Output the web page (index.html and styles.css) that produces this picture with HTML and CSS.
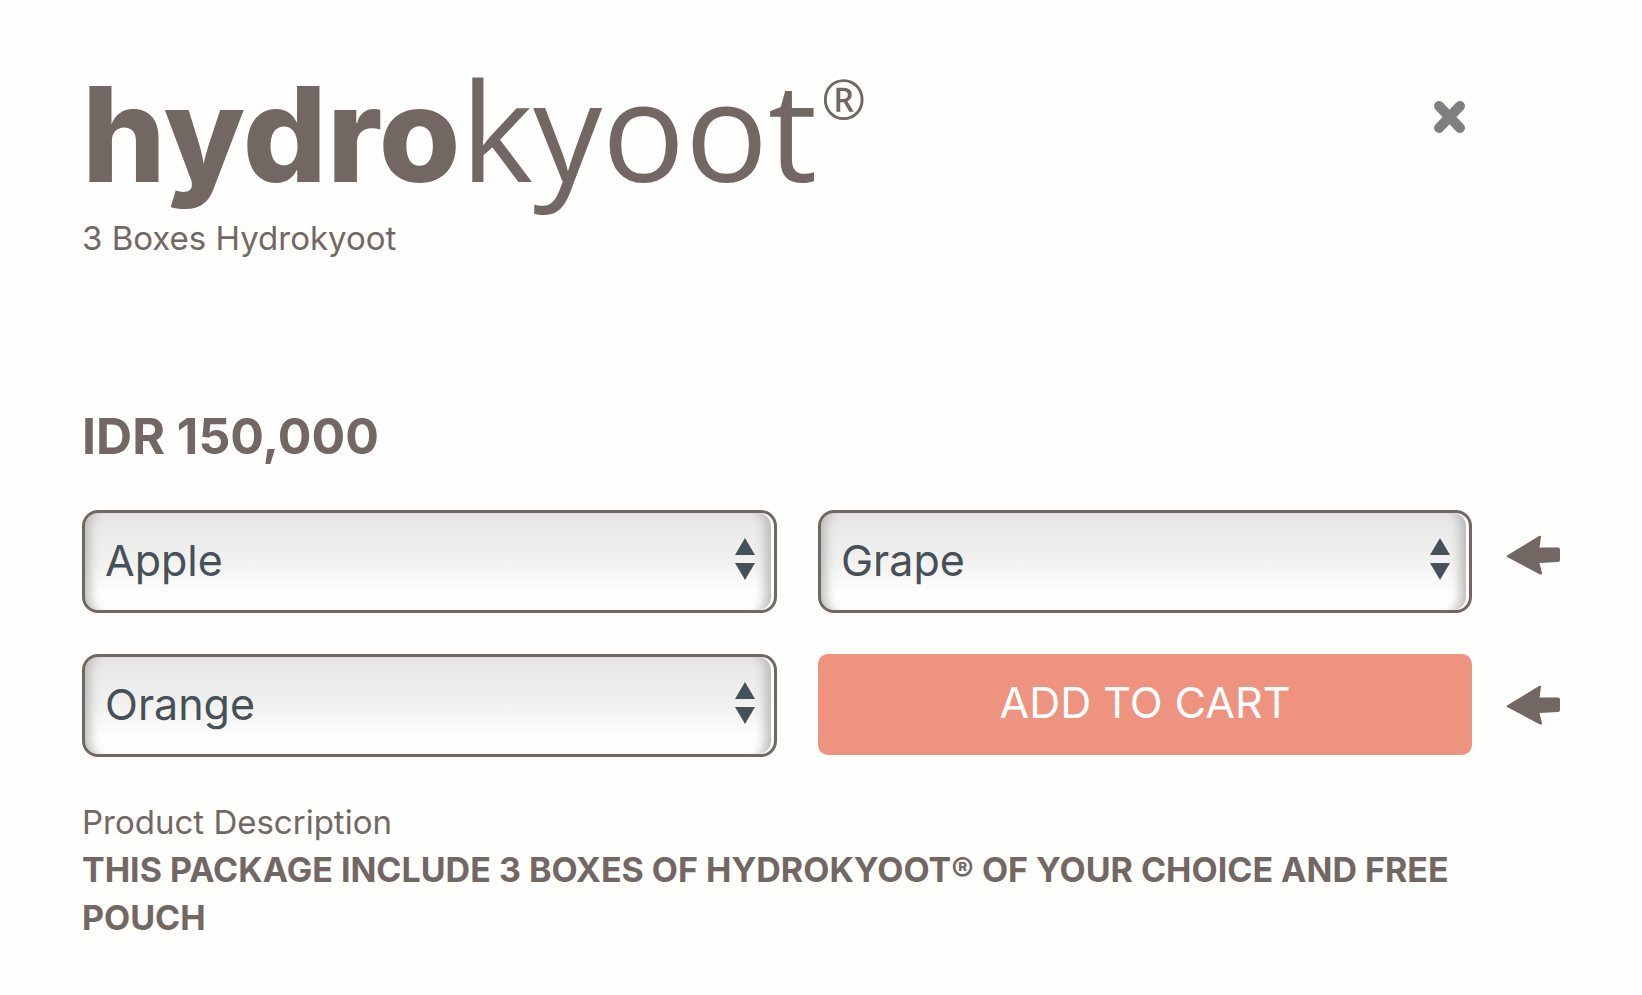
FILE: index.html
```html
<!DOCTYPE html>
<html lang="en">
<head>
<meta charset="utf-8">
<meta name="viewport" content="width=device-width, initial-scale=1">
<title>Hydrokyoot</title>
<link rel="stylesheet" href="styles.css">
</head>
<body>
<main class="product">
  <header class="head">
    <h1 class="logo"><span class="wordmark"><span class="logo-bold">hydro</span><span class="logo-light">kyoot</span></span><span class="logo-mark">®</span></h1>
    <button class="close" type="button" aria-label="Close">
      <svg viewBox="0 0 32 34" width="32" height="34"><path d="M5 6L26 28M26 6L5 28"/></svg>
    </button>
  </header>
  <p class="subtitle">3 Boxes Hydrokyoot</p>
  <p class="price">IDR 150,000</p>
  <form class="order">
    <div class="fields">
      <div class="field">
        <select class="select" aria-label="First flavour"><option>Apple</option><option>Grape</option><option>Orange</option></select>
        <svg class="updown" viewBox="0 0 20 42" width="20" height="42"><path d="M10 0L20 17H0zM10 42L20 25H0z"/></svg>
      </div>
      <div class="field">
        <select class="select" aria-label="Second flavour"><option>Grape</option><option>Apple</option><option>Orange</option></select>
        <svg class="updown" viewBox="0 0 20 42" width="20" height="42"><path d="M10 0L20 17H0zM10 42L20 25H0z"/></svg>
      </div>
      <div class="field">
        <select class="select" aria-label="Third flavour"><option>Orange</option><option>Apple</option><option>Grape</option></select>
        <svg class="updown" viewBox="0 0 20 42" width="20" height="42"><path d="M10 0L20 17H0zM10 42L20 25H0z"/></svg>
      </div>
      <button class="add" type="button">ADD TO CART</button>
    </div>
    <div class="pointers">
      <svg class="pointer" viewBox="0 0 54 40" width="54" height="40"><path d="M1 20.500L33 1Q35.500 0 35 2L33.500 12.500H52Q54 12.500 54 14.500V25Q54 27 52 27L33.500 28L36 38Q36.500 40 34 39.500L1 22Q0 21.500 1 20.500Z"/></svg>
      <svg class="pointer" viewBox="0 0 54 40" width="54" height="40"><path d="M1 20.500L33 1Q35.500 0 35 2L33.500 12.500H52Q54 12.500 54 14.500V25Q54 27 52 27L33.500 28L36 38Q36.500 40 34 39.500L1 22Q0 21.500 1 20.500Z"/></svg>
    </div>
  </form>
  <section class="description">
    <h2 class="label">Product Description</h2>
    <p class="text">THIS PACKAGE INCLUDE 3 BOXES OF HYDROKYOOT® OF YOUR CHOICE AND FREE POUCH</p>
  </section>
</main>
</body>
</html>
```
FILE: styles.css
```css
* { box-sizing: border-box; }
body {
  margin: 0;
  background: #fefefc;
  color: #736763;
  font-family: Inter, "Liberation Sans", sans-serif;
}
h1, h2, p { margin: 0; }
.product { padding: 48px 82px; }
.head {
  display: flex;
  justify-content: space-between;
  align-items: flex-start;
  padding-right: 94px;
}
.logo {
  display: flex;
  align-items: flex-start;
  font-size: 138px;
  line-height: 160px;
  font-weight: 400;
}
.logo-bold { font-family: Inter, sans-serif; font-size: 132px; font-weight: 800; }
.logo-light { font-family: "Open Sans", sans-serif; }
.logo-mark { font-family: "Open Sans", sans-serif; font-size: 54px; line-height: 100px; margin-left: 4px; }
.close {
  margin-top: 52px;
  padding: 0;
  border: 0;
  background: none;
  line-height: 0;
  cursor: pointer;
}
.close path { stroke: #7f7f7f; stroke-width: 10; stroke-linecap: round; }
.subtitle { margin-top: 6px; font-size: 33px; line-height: 36px; }
.price { margin-top: 152px; font-size: 50px; line-height: 56px; font-weight: 700; }
.order { display: flex; gap: 34px; margin-top: 46px; }
.fields {
  flex: 1;
  display: grid;
  grid-template-columns: 695fr 654fr;
  grid-auto-rows: 103px;
  gap: 41px;
}
.field { position: relative; }
.select {
  appearance: none;
  width: 100%;
  height: 100%;
  padding: 0 64px 4px 20px;
  border: 3px solid #736763;
  border-radius: 16px;
  background: linear-gradient(#e6e6e6, #f0f0ef 45%, #fefefc 85%);
  box-shadow: inset -3px 0 0 #fefefc, inset 14px 0 12px -10px #b5b5b5, inset -18px 0 12px -10px #b5b5b5;
  color: #465058;
  font: 400 43px/56px Inter, sans-serif;
}
.updown { position: absolute; right: 22px; top: 28px; fill: #465058; pointer-events: none; }
.add {
  height: 101px;
  padding: 0 0 6px;
  border: 0;
  border-radius: 10px;
  background: #ee937f;
  color: #fff;
  font: 400 43px/56px Inter, sans-serif;
  cursor: pointer;
}
.pointers { display: grid; grid-auto-rows: 40px; gap: 110px; padding-top: 25px; }
.pointer { fill: #736763; }
.description { margin-top: 41px; font-size: 34px; line-height: 48px; }
.label { font-size: 33px; font-weight: 400; }
.text { font-weight: 700; max-width: 1400px; }
```
